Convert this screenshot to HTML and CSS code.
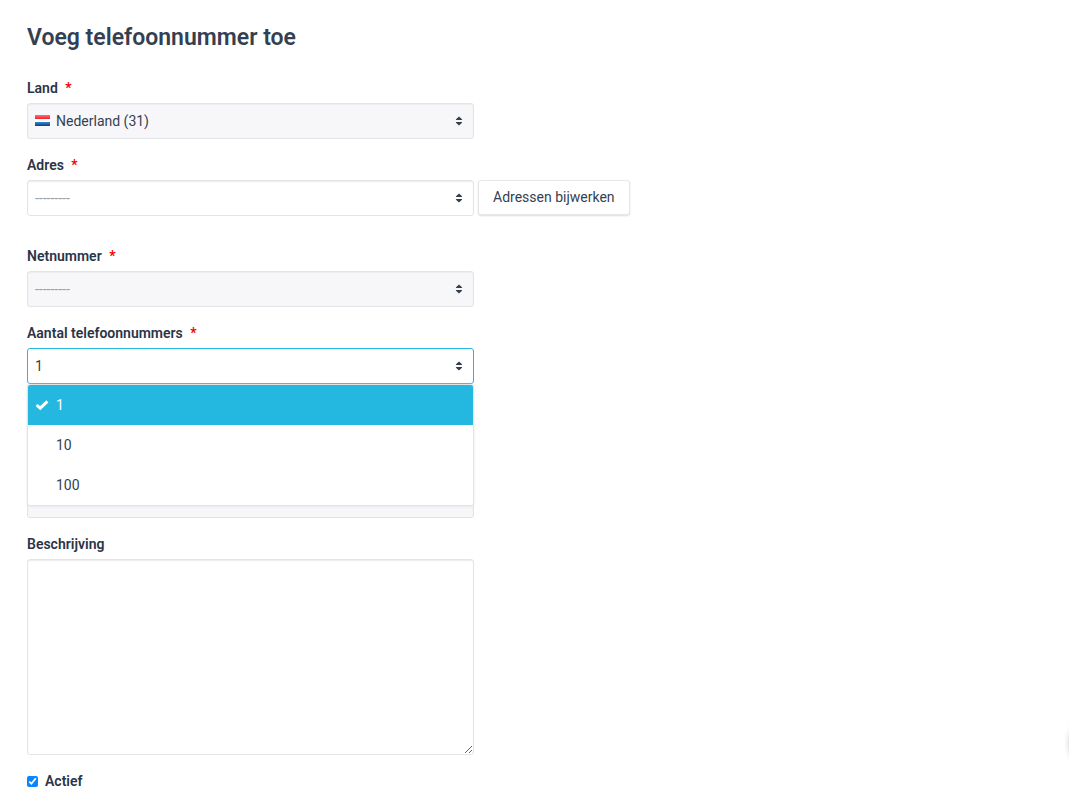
FILE: index.html
```html
<!DOCTYPE html>
<html lang="nl">
<head>
<meta charset="utf-8">
<meta name="viewport" content="width=device-width, initial-scale=1">
<title>Voeg telefoonnummer toe</title>
<link rel="stylesheet" href="styles.css">
</head>
<body>
<svg class="defs" aria-hidden="true">
  <symbol id="caret" viewBox="0 0 8 10"><path d="M4 0.5 7 3.3Q7.6 4.1 6.6 4.1H1.4Q0.4 4.1 1 3.3ZM4 9.5 7 6.7Q7.6 5.9 6.6 5.9H1.4Q0.4 5.9 1 6.7Z" fill="#343f4e"/></symbol>
</svg>
<main class="page">
  <h1 class="title">Voeg telefoonnummer toe</h1>
  <form class="form">
    <div class="field">
      <label class="label" for="land">Land <span class="required">*</span></label>
      <div class="control">
        <select class="select select-muted select-flag" id="land"><option>Nederland (31)</option></select>
        <svg class="flag" viewBox="0 0 15 11" aria-hidden="true">
          <defs>
            <linearGradient id="red" x2="0" y2="1"><stop stop-color="#ff7078"/><stop offset="1" stop-color="#f21c28"/></linearGradient>
            <linearGradient id="blue" x2="0" y2="1"><stop stop-color="#3b88c8"/><stop offset="1" stop-color="#063f88"/></linearGradient>
          </defs>
          <rect width="15" height="11" fill="#fff"/>
          <rect width="15" height="4" fill="url(#red)"/>
          <rect y="7" width="15" height="4" fill="url(#blue)"/>
        </svg>
        <svg class="caret" aria-hidden="true"><use href="#caret"/></svg>
      </div>
    </div>
    <div class="field field-wide">
      <label class="label" for="adres">Adres <span class="required">*</span></label>
      <div class="row">
        <div class="control">
          <select class="select select-empty" id="adres"><option>---------</option></select>
          <svg class="caret" aria-hidden="true"><use href="#caret"/></svg>
        </div>
        <button class="button" type="button">Adressen bijwerken</button>
      </div>
    </div>
    <div class="field">
      <label class="label" for="netnummer">Netnummer <span class="required">*</span></label>
      <div class="control">
        <select class="select select-muted select-empty" id="netnummer"><option>---------</option></select>
        <svg class="caret" aria-hidden="true"><use href="#caret"/></svg>
      </div>
    </div>
    <div class="field field-open">
      <label class="label" for="aantal">Aantal telefoonnummers <span class="required">*</span></label>
      <div class="control">
        <select class="select select-active" id="aantal"><option>1</option></select>
        <svg class="caret" aria-hidden="true"><use href="#caret"/></svg>
        <ul class="menu" role="listbox">
          <li class="option option-selected" role="option" aria-selected="true"><svg class="check" viewBox="0 0 14 12" aria-hidden="true"><path d="M1.6 6 5.2 9.2 12.4 2.4" fill="none" stroke="#fff" stroke-width="3"/></svg>1</li>
          <li class="option" role="option">10</li>
          <li class="option" role="option">100</li>
        </ul>
      </div>
    </div>
    <div class="field">
      <div class="control"><select class="select select-muted" disabled></select></div>
    </div>
    <div class="field">
      <label class="label" for="beschrijving">Beschrijving</label>
      <div class="control"><textarea class="textarea" id="beschrijving"></textarea></div>
    </div>
    <div class="check-row">
      <input class="checkbox" type="checkbox" id="actief" checked>
      <label class="label" for="actief">Actief</label>
    </div>
  </form>
</main>
<div class="launcher"></div>
</body>
</html>
```
FILE: styles.css
```css
* { box-sizing: border-box; }
body {
  margin: 0;
  overflow: hidden;
  background: #fff;
  color: #343f52;
  font: 14px/20px Roboto, "Liberation Sans", sans-serif;
}
.defs { position: absolute; width: 0; height: 0; }
.page { padding: 22px 27px 0; }
.title { margin: 0 0 24px; font-size: 23px; line-height: 32px; font-weight: 600; }
.field { margin-bottom: 16px; }
.field-wide { margin-bottom: 30px; }
.field-open { margin-bottom: 98px; }
.label { display: block; margin-bottom: 5px; font-weight: 600; color: #2b3547; }
.required { margin-left: 4px; color: #f00000; }
.row { display: flex; align-items: flex-start; gap: 4px; }
.control { position: relative; width: 100%; max-width: 447px; }
.select, .textarea {
  display: block;
  width: 100%;
  border: 1px solid #e3e4e8;
  border-radius: 3px;
  background: #fff;
  box-shadow: inset 0 1px 1px #ececef;
  color: #343f52;
  font: inherit;
  outline: none;
}
.select { appearance: none; height: 36px; padding: 0 28px 0 7px; opacity: 1; }
.select-muted { background: #f7f7fa; }
.select-flag { padding-left: 28px; }
.select-empty { color: #999da5; }
.select-active { border-color: #24b8e1; box-shadow: none; }
.flag { position: absolute; left: 8px; top: 12px; width: 15px; height: 11px; }
.caret { position: absolute; right: 11px; top: 13px; width: 8px; height: 10px; }
.button {
  height: 35px;
  padding: 0 14px 2px;
  border: 1px solid #e6e7eb;
  border-radius: 3px;
  background: #fff;
  box-shadow: 0 1px 2px #dcdde1;
  color: #343f52;
  font: inherit;
  white-space: nowrap;
}
.menu {
  position: absolute;
  z-index: 1;
  top: 100%;
  left: 0;
  right: 0;
  margin: 0;
  padding: 0;
  list-style: none;
  border: 1px solid #e3e4e8;
  border-radius: 3px;
  background: #fff;
  box-shadow: 0 1px 3px #e8e8ec;
}
.option { position: relative; height: 40px; padding-left: 28px; line-height: 40px; }
.option-selected { background: #24b8e1; color: #fff; border-radius: 2px 2px 0 0; }
.check { position: absolute; left: 7px; top: 14px; width: 14px; height: 12px; }
.textarea { height: 196px; padding: 8px; resize: both; }
.check-row { display: flex; align-items: center; gap: 7px; }
.check-row .label { margin: 0; }
.checkbox { width: 11px; height: 11px; margin: 0; accent-color: #0a84ff; }
.launcher {
  position: fixed;
  right: -61px;
  bottom: 27px;
  width: 60px;
  height: 60px;
  border-radius: 50%;
  box-shadow: 0 0 6px #b4b4b4;
}
```
